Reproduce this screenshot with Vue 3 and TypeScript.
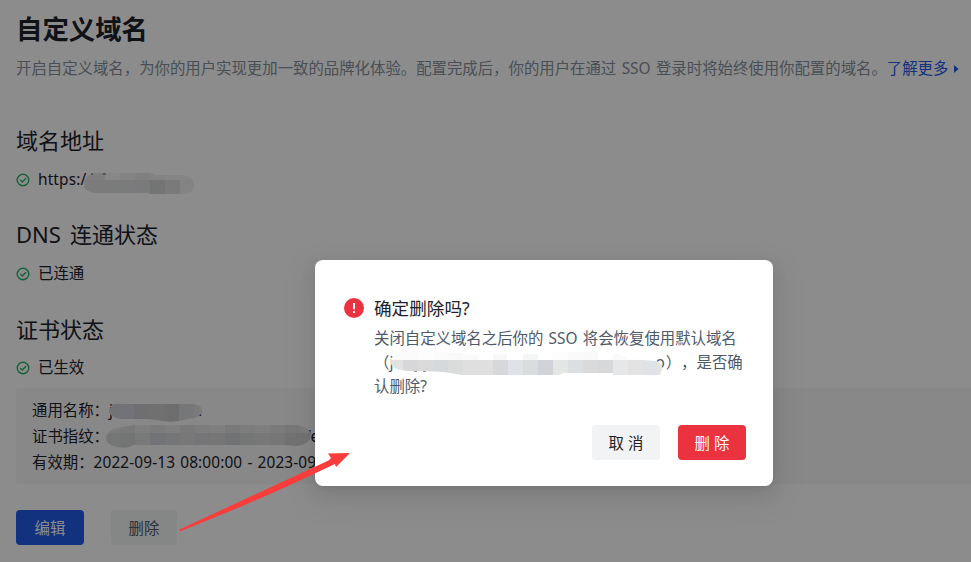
<script setup lang="ts">
interface Block { x: number; y: number; w: number; h: number; fill: string }
interface Mask { id: string; width: number; height: number; outline: string; blocks: Block[] }

const strip = (fills: string[], x: number, y: number, h: number, step = 15): Block[] =>
  fills.map((fill, i) => ({ x: x + i * step, y, w: step + 0.3, h, fill }))

const masks: Record<string, Mask> = {
  domain: {
    id: 'domain', width: 111, height: 22,
    outline: 'M10 0H68L71 2H98Q110 3 110 11Q110 21 98 21H65V20H11Q0 19 0 11Q0 3 10 0Z',
    blocks: [
      ...strip(['#e5e5e5', '#e5e5e5', '#f6f6f6', '#eeeeee', '#eaeaea', '#eeeeee', '#f2f2f2', '#f2f2f2'], -9, 0, 7),
      ...strip(['#e0e1e2', '#e0e1e2', '#dfe0e1', '#e0e1e2', '#dedfe2', '#d2d3d4', '#dfdfdf', '#eeeeee'], -9, 7, 15),
    ],
  },
  common: {
    id: 'common', width: 93, height: 19,
    outline: 'M4 1H82Q94 1 93 9Q91 15 79 16Q66 20 54 18L39 16H12Q0 15 0 7Z',
    blocks: strip(['#d1d2d5', '#ced2db', '#cacace', '#cdcdce', '#c9c9cb', '#d8d9da', '#dedee0'], -5, 0, 19),
  },
  finger: {
    id: 'finger', width: 206, height: 24,
    outline: 'M17 2L28 0H190Q205 2 205 11Q203 20 190 21L179 20H27Q22 24 11 22Q0 20 0 13Q1 4 17 2Z',
    blocks: [
      ...strip(['#e2e2e3', '#dbdcdc', '#e7e7e7', '#e0e0e0', '#e8e8e8', '#dddddd', '#e3e4e6', '#e8e8e8', '#dddddd', '#e3e3e3', '#e8e8e8', '#e1e1e1', '#dbdbdb', '#e2e2e2'], -1, 0, 8),
      ...strip(['#d8d8d8', '#d2d3d4', '#dcdddf', '#ced1d8', '#d5d7da', '#dadadb', '#d5d6d9', '#d8d8d8', '#ced0d3', '#d6d7d8', '#dadadc', '#d7d7d8', '#cfd0d2', '#d1d2d4'], -1, 8, 16),
    ],
  },
  fallback: {
    id: 'fallback', width: 273, height: 26,
    outline: 'M12 1H42V2H60V3H74V5H89V10H104V4H118V10H134V4H149V10H163V2H209V10H224V3L238 7V9L268 11L273 15V20L271 25H224V23H174L170 25H73L55 22L35 21H18L8 19Q2 17 1 11Q4 5 12 1Z',
    blocks: [
      ...strip(['#fbfbfb', '#fbfbfb', '#fdfdfd', '#fafbfa', '#f8f9f8', '#fafafa', '#fdfdfd', '#f8f8f8', '#fdfdfd', '#f5f7f6', '#fdfdfd', '#fdfdfd', '#fafafa', '#f9f9f9', '#fafafa', '#fafafa', '#fafafa', '#fafafa', '#fafafa'], -1, 0, 10),
      ...strip(['#e2e2e2', '#d7d7d9', '#dadada', '#d6d9dc', '#dadcdc', '#dfdfdf', '#dfdfdf', '#d7d8da', '#dfe3e7', '#dadddd', '#d2d3d8', '#e4e6e4', '#dbdfe1', '#dbdada', '#d7d8d9', '#e6e7e8', '#e3e3e3', '#dfe3e6', '#e5e5e6'], -1, 10, 16),
    ],
  },
}

const certificate = [
  { label: '通用名称：', mask: masks.common, name: 'common' },
  { label: '证书指纹：', mask: masks.finger, name: 'finger' },
]
</script>

<template>
  <div class="screen">
    <main class="page">
      <h1>自定义域名</h1>
      <p class="intro">
        <span>开启自定义域名，为你的用户实现更加一致的品牌化体验。配置完成后，你的用户在通过 SSO 登录时将始终使用你配置的域名。</span>
        <a>了解更多<svg class="caret" viewBox="0 0 5 8"><path d="M0 0L4.5 4L0 8Z" /></svg></a>
      </p>

      <section>
        <h2>域名地址</h2>
        <div class="status">
          <svg class="ok" viewBox="0 0 14 14"><circle cx="7" cy="7" r="5.8" /><path d="M4.3 7L6.3 9L10 5.2" /></svg>
          <span class="url">https:/</span>
          <svg class="mask domain" :width="masks.domain.width" :height="masks.domain.height">
            <defs><clipPath id="domain"><path :d="masks.domain.outline" /></clipPath></defs>
            <g clip-path="url(#domain)"><rect v-for="(b, i) in masks.domain.blocks" :key="i" :x="b.x" :y="b.y" :width="b.w" :height="b.h" :fill="b.fill" /></g>
            <path d="M7 1H9M19 1H22" stroke="#555" />
          </svg>
        </div>
      </section>
      <section>
        <h2>DNS 连通状态</h2>
        <div class="status">
          <svg class="ok" viewBox="0 0 14 14"><circle cx="7" cy="7" r="5.8" /><path d="M4.3 7L6.3 9L10 5.2" /></svg>
          <span>已连通</span>
        </div>
      </section>
      <section>
        <h2>证书状态</h2>
        <div class="status">
          <svg class="ok" viewBox="0 0 14 14"><circle cx="7" cy="7" r="5.8" /><path d="M4.3 7L6.3 9L10 5.2" /></svg>
          <span>已生效</span>
        </div>
      </section>

      <div class="certificate">
        <div v-for="row in certificate" :key="row.name" class="row">
          <span class="label">{{ row.label }}</span>
          <span v-if="row.name === 'common'" class="letter">j</span>
          <svg class="mask" :class="row.name" :width="row.mask.width" :height="row.mask.height">
            <defs><clipPath :id="row.mask.id"><path :d="row.mask.outline" /></clipPath></defs>
            <g :clip-path="`url(#${row.mask.id})`"><rect v-for="(b, i) in row.mask.blocks" :key="i" :x="b.x" :y="b.y" :width="b.w" :height="b.h" :fill="b.fill" /></g>
          </svg>
          <span class="tail">{{ row.name === 'common' ? '.' : "'e" }}</span>
        </div>
        <div class="row"><span class="label">有效期：</span><span class="dates">2022-09-13 08:00:00 - 2023-09-14</span></div>
      </div>

      <div class="actions">
        <button class="edit">编辑</button>
        <button class="remove">删除</button>
      </div>
    </main>

    <div class="overlay">
      <div class="dialog" role="dialog">
        <svg class="alert" viewBox="0 0 20 20"><circle cx="10" cy="10" r="10" fill="#eb333f" /><path d="M9 5H11V11.3H9ZM9 13H11V15H9Z" fill="#fff" /></svg>
        <div class="content">
          <h3>确定删除吗?</h3>
          <div class="message">
            <div class="line first">关闭自定义域名之后你的 SSO 将会恢复使用默认域名</div>
            <div class="line second">
              <span class="open">（</span><span class="jay">j</span>
              <svg class="mask fallback" :width="masks.fallback.width" :height="masks.fallback.height">
                <defs><clipPath id="fallback"><path :d="masks.fallback.outline" /></clipPath></defs>
                <g clip-path="url(#fallback)"><rect v-for="(b, i) in masks.fallback.blocks" :key="i" :x="b.x" :y="b.y" :width="b.w" :height="b.h" :fill="b.fill" /></g>
                <path d="M25 21.5H28M34 21.5H37" stroke="#8d929b" />
              </svg>
              <span class="close">o</span><span class="rest">），是否确</span>
            </div>
            <div class="line">认删除?</div>
          </div>
          <div class="choices">
            <button class="cancel">取 消</button>
            <button class="confirm">删 除</button>
          </div>
        </div>
      </div>
    </div>

    <svg class="arrow" viewBox="0 0 172 80"><path d="M0.5 76.5L149.5 7.5L152 5L149 0.5L171 0L157 14L156 11L109 33L61 54L1 78.5Z" /></svg>
  </div>
</template>

<style>
body { margin: 0; overflow: hidden; }
</style>

<style scoped>
* { box-sizing: border-box; }
.screen {
  position: relative; width: 971px; height: 562px; overflow: hidden; background: #fff; color: #1d2129;
  font-family: "Noto Sans", "Noto Sans CJK SC", sans-serif; font-size: 15.4px; font-weight: 400; white-space: nowrap;
  text-spacing-trim: space-all;
}
h1, h2, h3, p { margin: 0; }
button { border: 0; padding: 0; font: inherit; border-radius: 4px; }
.page { padding: 10px 0 0 16px; display: flex; flex-direction: column; }
h1 { font-size: 26.4px; line-height: 38px; height: 38px; font-weight: 700; }
.intro { display: flex; align-items: center; height: 26px; line-height: 26px; margin: 8px 0 44px; color: #86909c; word-spacing: 1.4px; }
.intro a { color: #215ae5; display: flex; align-items: center; }
.caret { width: 5px; height: 8px; margin-left: 6px; fill: currentColor; }
section { height: 94px; }
h2 { height: 28px; line-height: 28px; font-size: 22px; font-weight: 400; word-spacing: 1.5px; }
section:nth-of-type(2) h2 { word-spacing: 3.5px; }
section:nth-of-type(3) h2 { line-height: 30px; }
.status { height: 26px; line-height: 26px; display: flex; align-items: center; margin-top: 13px; }
.ok { width: 14px; height: 14px; margin: 0 8px 1px 0; fill: none; stroke: #24b36b; stroke-width: 1.4; }
.mask { flex: none; display: block; }
.url { width: 46px; letter-spacing: .15px; }
.domain { margin-top: 8px; position: relative; }
.certificate { margin-top: -20px; height: 96px; padding: 10px 0 0 16px; border-radius: 4px 0 0 4px; background: #f7f8fa; }
.row { display: flex; height: 26px; line-height: 26px; }
.label { flex: none; }
.row .letter { width: 2px; }
.common { position: relative; margin: 5px 0 0 -2px; }
.common + .tail { margin-left: -4px; }
.finger { position: relative; margin: 1px 0 0 -3px; }
.finger + .tail { margin-left: -4px; }
.dates { letter-spacing: .12px; word-spacing: 1px; }
.actions { display: flex; gap: 27px; margin-top: 26px; }
.actions button { height: 35px; }
.edit { width: 68px; background: #215ae5; color: #fff; }
.actions .remove { width: 66px; background: #f2f5f5; color: #4e5969; }
.overlay { position: absolute; inset: 0; background: rgba(0, 0, 0, .45); padding: 260px 0 0 315px; }
.dialog {
  width: 458px; height: 226px; padding: 35px 27px 26px 29px; display: flex; background: #fff; border-radius: 8px;
  box-shadow: 0 3px 7px -4px rgba(0,0,0,.12), 0 7px 18px rgba(0,0,0,.08), 0 10px 31px 9px rgba(0,0,0,.05);
}
.alert { flex: none; width: 20px; height: 20px; margin: 3px 10px 0 0; }
.content { flex: 1; min-width: 0; display: flex; flex-direction: column; }
h3 { font-size: 17.6px; line-height: 26px; font-weight: 400; }
.message { margin-top: 6px; color: #4e5969; line-height: 24px; }
.line { display: flex; height: 24px; }
.first { word-spacing: 1.3px; }
.jay { width: 2px; }
.second svg { position: relative; margin: -1px 0 0 -2px; }
.close { margin-left: -7px; }
.rest { margin-left: 1px; }
.choices { margin-top: auto; display: flex; justify-content: flex-end; gap: 18px; }
.choices button { width: 68px; height: 35px; }
.cancel { background: #f2f3f5; color: #1d2129; }
.confirm { background: #eb333f; color: #fff; }
.arrow { position: absolute; left: 179px; top: 453px; width: 172px; height: 80px; fill: #fa3c3a; }
</style>
